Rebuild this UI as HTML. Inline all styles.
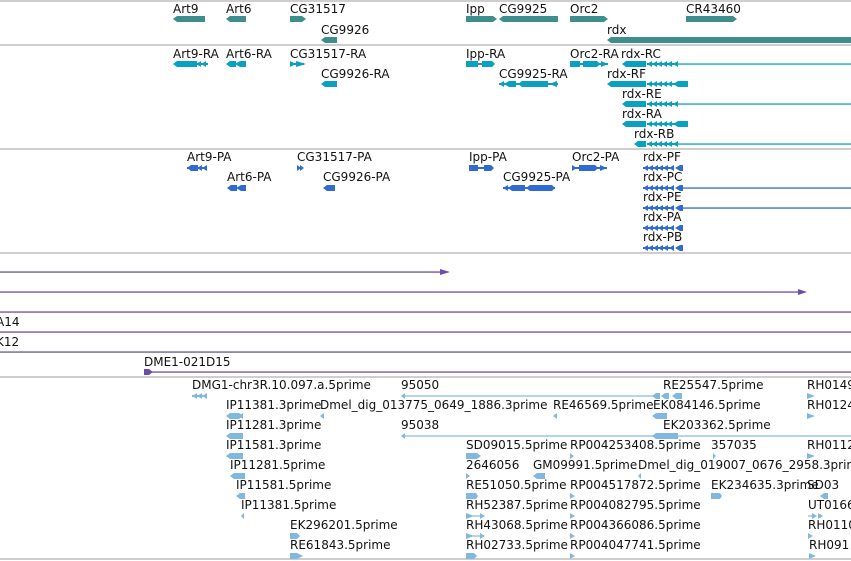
<!DOCTYPE html>
<html><head><meta charset="utf-8"><style>
html,body{margin:0;padding:0;background:#fff;width:851px;height:561px;overflow:hidden}
svg{display:block}
text{font-family:"DejaVu Sans","Liberation Sans",sans-serif;font-size:12px;fill:#111}
</style></head><body>
<svg width="851" height="561" xmlns="http://www.w3.org/2000/svg">
<defs>
<g id="chev"><polygon points="0,3 5,0 5,6"/><polygon points="5,3 10,0 10,6"/><polygon points="10,3 15,0 15,6"/><polygon points="15,3 20,0 20,6"/><polygon points="20,3 25,0 25,6"/><polygon points="26,3 31,0 31,6"/><rect x="0" y="2" width="31" height="2"/></g>
</defs>
<g stroke="#bdbdbd" stroke-width="1.5">
<line x1="0" y1="1" x2="851" y2="1"/><line x1="0" y1="45" x2="851" y2="45"/>
<line x1="0" y1="149" x2="851" y2="149"/><line x1="0" y1="253" x2="851" y2="253"/>
<line x1="0" y1="377" x2="851" y2="377"/><line x1="0" y1="559" x2="851" y2="559"/>
</g>

<g fill="#3f8e8e">
<polygon points="173,19 177,16 205,16 205,22 177,22"/>
<polygon points="226,19 230,16 246,16 246,22 230,22"/>
<polygon points="290,16 302,16 306,19 302,22 290,22"/>
<polygon points="321,40 325,37 337,37 337,43 325,43"/>
<polygon points="466,16 493,16 497,19 493,22 466,22"/>
<polygon points="499,19 503,16 558,16 558,22 503,22"/>
<polygon points="570,16 604,16 608,19 604,22 570,22"/>
<polygon points="686,16 733,16 737,19 733,22 686,22"/>
<polygon points="607,40 611,37 851,37 851,43 611,43"/>
</g>
<text x="173" y="13">Art9</text><text x="226" y="13">Art6</text><text x="290" y="13">CG31517</text>
<text x="321" y="34">CG9926</text><text x="466" y="13">Ipp</text><text x="499" y="13">CG9925</text>
<text x="570" y="13">Orc2</text><text x="686" y="13">CR43460</text><text x="607" y="34">rdx</text>

<g fill="#0aa0c0">
<polygon points="173,64 177,61 197,61 197,67 177,67"/><polygon points="196,64 201,61 201,67"/><polygon points="201,64 206,61 206,67"/><rect x="196" y="63" width="12" height="2"/>
<polygon points="226,64 230,61 236,61 236,67 230,67"/><polygon points="235,64 240,61 246,61 246,67 240,67"/>
<polygon points="290,61 296,64 290,67"/><polygon points="296,61 306,64 296,67"/><rect x="290" y="63" width="14" height="2"/>
<polygon points="321,84 325,81 337,81 337,87 325,87"/>
<rect x="466" y="61" width="12" height="6"/><rect x="478" y="63" width="6" height="2"/><polygon points="482,61 492,61 495,64 492,67 482,67"/>
<polygon points="499,84 504,81 504,87"/><polygon points="504,84 509,81 516,81 516,87 509,87"/><polygon points="518,84 522,81 548,81 548,87 522,87"/><polygon points="549,84 557,81 557,87"/><rect x="499" y="83" width="59" height="2"/>
<rect x="570" y="61" width="10" height="6"/><polygon points="583,61 597,61 600,64 597,67 583,67"/><polygon points="601,61 608,64 601,67"/><rect x="570" y="63" width="38" height="2"/>
<!-- rdx-RC -->
<polygon points="622,64 626,61 646,61 646,67 626,67"/><use href="#chev" x="647" y="61"/><rect x="678" y="63.4" width="173" height="1.3"/>
<!-- rdx-RF -->
<polygon points="607,84 611,81 646,81 646,87 611,87"/><use href="#chev" x="647" y="81"/><rect x="678" y="81" width="10" height="6"/>
<!-- rdx-RE -->
<polygon points="622,104 626,101 646,101 646,107 626,107"/><use href="#chev" x="647" y="101"/><rect x="678" y="103.4" width="173" height="1.3"/>
<!-- rdx-RA -->
<polygon points="622,124 626,121 646,121 646,127 626,127"/><use href="#chev" x="647" y="121"/><rect x="678" y="121" width="10" height="6"/>
<!-- rdx-RB -->
<polygon points="634,144 638,141 646,141 646,147 638,147"/><use href="#chev" x="647" y="141"/><rect x="678" y="143.4" width="173" height="1.3"/>
</g>
<text x="173" y="58">Art9-RA</text><text x="226" y="58">Art6-RA</text><text x="290" y="58">CG31517-RA</text>
<text x="321" y="78">CG9926-RA</text><text x="466" y="58">Ipp-RA</text><text x="499" y="78">CG9925-RA</text>
<text x="570" y="58">Orc2-RA</text><text x="621" y="58">rdx-RC</text><text x="607" y="78">rdx-RF</text>
<text x="622" y="98">rdx-RE</text><text x="622" y="118">rdx-RA</text><text x="634" y="138">rdx-RB</text>

<g fill="#2f6bd0">
<polygon points="187,168 191,165 198,165 198,171 191,171"/><polygon points="197,168 202,165 202,171"/><polygon points="202,168 207,165 207,171"/><rect x="187" y="167" width="20" height="2"/>
<polygon points="227,188 231,185 237,185 237,191 231,191"/><polygon points="236,188 241,185 246,185 246,191 241,191"/>
<polygon points="297,165 301,168 297,171"/><polygon points="300,165 304,168 300,171"/>
<polygon points="323,188 327,185 335,185 335,191 327,191"/>
<rect x="469" y="165" width="9" height="6"/><rect x="478" y="167" width="6" height="2"/><polygon points="484,165 491,165 494,168 491,171 484,171"/>
<polygon points="503,188 508,185 508,191"/><polygon points="508,188 512,185 525,185 525,191 512,191"/><polygon points="526,188 530,185 552,185 552,191 530,191"/><polygon points="552,185 555,188 552,191"/><rect x="503" y="187" width="52" height="2"/>
<polygon points="572,165 577,168 572,171"/><polygon points="579,165 595,165 598,168 595,171 579,171"/><polygon points="600,165 607,168 600,171"/><rect x="572" y="167" width="35" height="2"/>
<g id="pf"><use href="#chev" x="643" y="165"/><polygon points="675,168 680,165 683,165 683,171 680,171"/></g>
<use href="#pf" y="20"/><use href="#pf" y="40"/><use href="#pf" y="60"/><use href="#pf" y="80"/>
<rect x="683" y="187.4" width="168" height="1.3"/><rect x="683" y="207.4" width="168" height="1.3"/>
</g>
<text x="187" y="161">Art9-PA</text><text x="227" y="181">Art6-PA</text><text x="297" y="161">CG31517-PA</text>
<text x="323" y="181">CG9926-PA</text><text x="469" y="161">Ipp-PA</text><text x="503" y="181">CG9925-PA</text>
<text x="572" y="161">Orc2-PA</text>
<text x="643" y="161">rdx-PF</text><text x="643" y="181">rdx-PC</text><text x="643" y="201">rdx-PE</text><text x="643" y="221">rdx-PA</text><text x="643" y="241">rdx-PB</text>

<g fill="#6a4fa8">
<rect x="0" y="271.4" width="442" height="1.3"/><polygon points="440,269 450,272 440,275"/>
<rect x="0" y="291.4" width="800" height="1.3"/><polygon points="798,289 807,292 798,295"/>
<rect x="0" y="311.4" width="851" height="1.3"/><rect x="0" y="331.4" width="851" height="1.3"/><rect x="0" y="351.4" width="851" height="1.3"/>
<rect x="150" y="371.4" width="701" height="1.3"/><polygon points="144,369 149,369 153,372 149,375 144,375"/>
</g>
<text x="-4" y="326">A14</text><text x="-4" y="346">K12</text><text x="144" y="366">DME1-021D15</text>

<g fill="#80b8e0">
<polygon points="192,396 197,393 197,399"/><polygon points="197,396 202,393 202,399"/><polygon points="202,396 207,393 207,399"/><rect x="192" y="395" width="15" height="2"/>
<rect x="403" y="395.4" width="250" height="1.2"/><polygon points="401,396 405,393 405,399"/>
<polygon points="652,396 656,393 660,393 660,399 656,399"/><polygon points="661,396 665,393 669,393 669,399 665,399"/><polygon points="672,396 676,393 682,393 682,399 676,399"/>
<polygon points="807,393 815,396 807,399"/>
<polygon points="226,416 230,413 239,413 243,416 239,419 230,419"/><polygon points="238,416 243,413 243,419"/>
<polygon points="320,416 324,413 324,419"/><polygon points="553,416 557,413 557,419"/>
<polygon points="652,416 656,413 667,413 667,419 656,419"/><polygon points="807,413 815,416 807,419"/>
<polygon points="226,436 230,433 243,433 243,439 230,439"/>
<rect x="403" y="435.4" width="448" height="1.2"/><polygon points="401,436 405,433 405,439"/>
<polygon points="652,436 656,433 678,433 678,439 656,439"/>
<polygon points="226,456 230,453 243,453 243,459 230,459"/>
<polygon points="466,453 477,453 481,456 477,459 466,459"/><polygon points="570,453 574,456 570,459"/><polygon points="713,453 716,456 713,459"/><polygon points="807,453 815,456 807,459"/>
<polygon points="230,476 234,473 245,473 245,479 234,479"/>
<polygon points="466,473 470,476 466,479"/><polygon points="533,476 537,473 545,473 545,479 537,479"/><polygon points="638,476 641,473 641,479"/>
<polygon points="236,496 240,493 245,493 245,499 240,499"/>
<polygon points="466,493 476,493 478,496 476,499 466,499"/><polygon points="570,493 575,496 570,499"/><polygon points="711,493 720,493 722,496 720,499 711,499"/><polygon points="820,496 824,493 828,493 828,499 824,499"/>
<polygon points="241,516 244,513 244,519"/>
<polygon points="466,513 474,516 466,519"/><rect x="466" y="515.4" width="14" height="1.2"/><polygon points="480,513 485,516 480,519"/>
<polygon points="570,513 575,516 570,519"/>
<rect x="808" y="515.4" width="8" height="1.2"/><polygon points="812,513 817,516 812,519"/><polygon points="818,513 823,516 818,519"/>
<polygon points="290,533 297,533 300,536 297,539 290,539"/>
<polygon points="466,533 474,536 466,539"/><rect x="466" y="535.4" width="14" height="1.2"/><polygon points="480,533 485,536 480,539"/>
<polygon points="570,533 575,536 570,539"/><polygon points="808,533 813,536 808,539"/>
<polygon points="290,553 297,553 297,559 290,559"/><polygon points="297,553 303,556 297,559"/>
<polygon points="466,553 474,553 477,556 474,559 466,559"/><polygon points="570,553 575,556 570,559"/><polygon points="809,553 816,556 809,559"/>
</g>
<text x="192" y="389">DMG1-chr3R.10.097.a.5prime</text><text x="401" y="389">95050</text><text x="663" y="389">RE25547.5prime</text><text x="807" y="389">RH0149</text>
<text x="226" y="409">IP11381.3prime</text><text x="320" y="409">Dmel_dig_013775_0649_1886.3prime</text><text x="553" y="409">RE46569.5prime</text><text x="653" y="409">EK084146.5prime</text><text x="807" y="409">RH0124</text>
<text x="226" y="429">IP11281.3prime</text><text x="401" y="429">95038</text><text x="663" y="429">EK203362.5prime</text>
<text x="226" y="449">IP11581.3prime</text><text x="466" y="449">SD09015.5prime</text><text x="570" y="449">RP004253408.5prime</text><text x="711" y="449">357035</text><text x="807" y="449">RH0112</text>
<text x="230" y="469">IP11281.5prime</text><text x="466" y="469">2646056</text><text x="533" y="469">GM09991.5prime</text><text x="638" y="469">Dmel_dig_019007_0676_2958.3prime</text>
<text x="236" y="489">IP11581.5prime</text><text x="466" y="489">RE51050.5prime</text><text x="570" y="489">RP004517872.5prime</text><text x="711" y="489">EK234635.3prime</text><text x="807" y="489">SD03</text>
<text x="241" y="509">IP11381.5prime</text><text x="466" y="509">RH52387.5prime</text><text x="570" y="509">RP004082795.5prime</text><text x="808" y="509">UT0166</text>
<text x="290" y="529">EK296201.5prime</text><text x="466" y="529">RH43068.5prime</text><text x="570" y="529">RP004366086.5prime</text><text x="808" y="529">RH0110</text>
<text x="290" y="549">RE61843.5prime</text><text x="466" y="549">RH02733.5prime</text><text x="570" y="549">RP004047741.5prime</text><text x="809" y="549">RH091</text>
</svg>
</body></html>
